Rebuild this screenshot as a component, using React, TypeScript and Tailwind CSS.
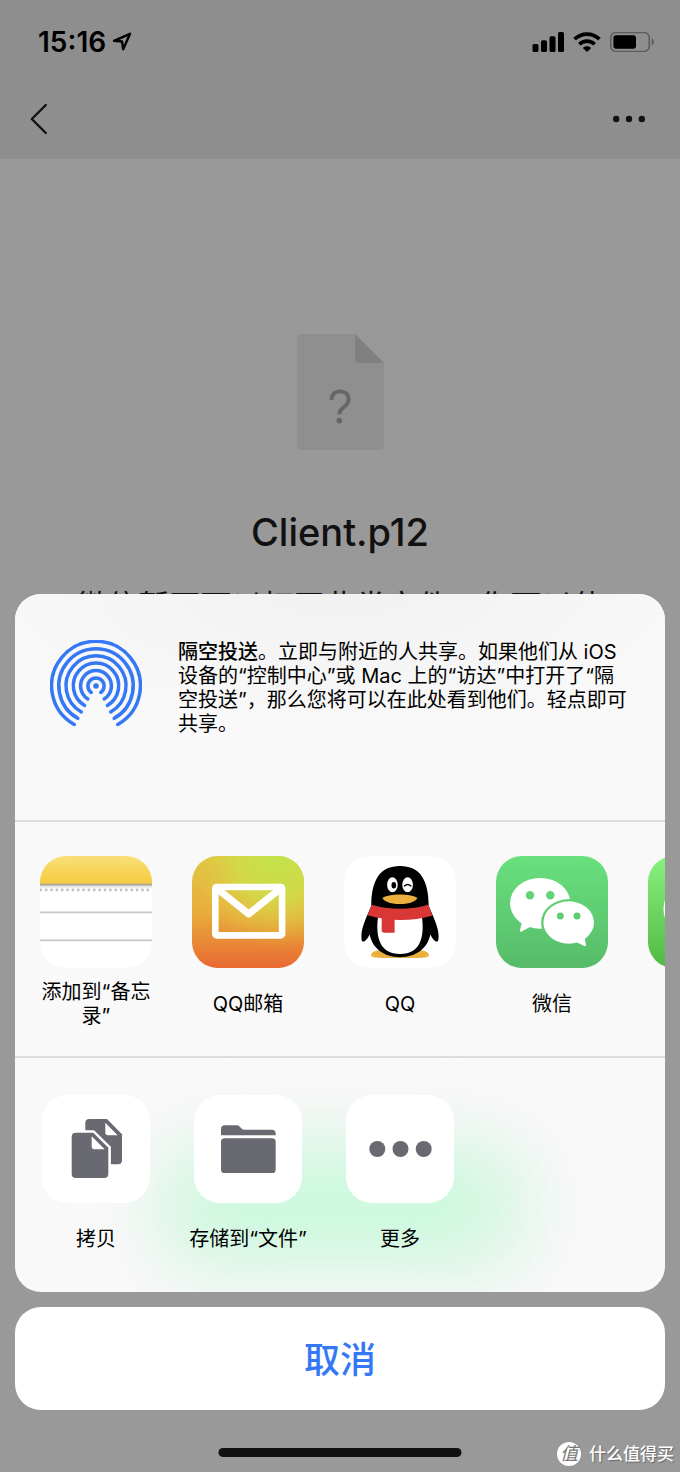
import React from "react";

const FONT = "font-['Inter','Noto_Sans_CJK_SC',sans-serif]";

function LocationArrow() {
  return (
    <svg className="h-5 w-5" viewBox="0 0 20 20" fill="none" aria-hidden="true">
      <path d="M2 8.8 18 1.8 11.2 17.2 10 9.5Z" stroke="#000" strokeWidth="2.4" strokeLinejoin="round" />
    </svg>
  );
}

function Signal() {
  return (
    <svg className="h-5 w-8" viewBox="0 0 32 20" aria-hidden="true">
      <rect x="0.5" y="12" width="6" height="8" rx="1.6" />
      <rect x="9" y="8.3" width="6" height="11.7" rx="1.6" />
      <rect x="17.5" y="4.2" width="6" height="15.8" rx="1.6" />
      <rect x="26" y="0" width="6" height="20" rx="1.6" />
    </svg>
  );
}

function Wifi() {
  return (
    <svg className="h-5 w-7" viewBox="0 0 28 20" fill="none" stroke="#000" aria-hidden="true">
      <path d="M1.6 7.2C8.6.4 19.4.4 26.4 7.2" strokeWidth="3.8" />
      <path d="M6.3 12.3C10.7 8.1 17.3 8.1 21.7 12.3" strokeWidth="3.6" />
      <path d="M9.8 15.9C12.2 13.7 15.8 13.7 18.2 15.9L14 20Z" fill="#000" stroke="none" />
    </svg>
  );
}

function Battery() {
  return (
    <svg className="h-5 w-11" viewBox="0 0 44 20" aria-hidden="true">
      <rect x="0.8" y="0.6" width="38.4" height="18.8" rx="5" fill="none" stroke="#5c5c5c" strokeWidth="1.5" />
      <rect x="3.4" y="3.3" width="22.6" height="13.4" rx="2.6" />
      <path d="M41.6 6.6C44.6 7.6 44.6 12.4 41.6 13.4Z" fill="#5c5c5c" />
    </svg>
  );
}

function UnknownFile() {
  return (
    <svg className="h-[116px] w-[87px]" viewBox="0 0 87 116" aria-hidden="true">
      <path d="M4 0H58L87 29V112Q87 116 83 116H4Q0 116 0 112V4Q0 0 4 0Z" fill="#8f8f8f" />
      <path d="M58 0 87 29H62Q58 29 58 25Z" fill="#808080" />
      <path d="M34.6 66C34.6 60.4 38 57.3 43.2 57.3S51.6 60.5 51.6 65.2C51.6 69 49.6 71 46.6 73.2 43.6 75.4 42.3 77 42.3 80.2" fill="none" stroke="#666" strokeWidth="3.8" />
      <circle cx="42.3" cy="86.6" r="2.8" fill="#666" />
    </svg>
  );
}

const RINGS: [number, number, number][] = [
  [44.4, 21.8, 38.4],
  [37.2, 18.2, 32.3],
  [30, 14.7, 26],
  [22.7, 11.4, 19.4],
  [15.4, 8.2, 12.9],
  [8.1, 4.8, 6.5],
];

function AirDrop() {
  return (
    <svg className="h-[92px] w-[92px] shrink-0" viewBox="-46 -46 92 92" fill="none" stroke="#3478f6" strokeWidth="3.5" strokeLinecap="round" aria-hidden="true">
      {RINGS.map(([r, x, y]) => (
        <path key={r} d={`M${-x} ${y}A${r} ${r} 0 1 1 ${x} ${y}`} />
      ))}
      <circle r="2.8" fill="#3478f6" stroke="none" />
    </svg>
  );
}

function NotesIcon() {
  return (
    <svg className="h-full w-full" viewBox="0 0 112 112" aria-hidden="true">
      <defs>
        <linearGradient id="notes" x2="0" y2="1">
          <stop stopColor="#f9df78" />
          <stop offset="1" stopColor="#f5cb3f" />
        </linearGradient>
        <linearGradient id="notesShade" x2="0" y2="1">
          <stop stopColor="#d8d8d8" />
          <stop offset="1" stopColor="#fff" />
        </linearGradient>
      </defs>
      <rect width="112" height="112" fill="#fff" />
      <rect width="112" height="28" fill="url(#notes)" />
      <rect y="29" width="112" height="4" fill="url(#notesShade)" />
      <rect y="27.6" width="112" height="2" fill="#b0ab98" />
      <path d="M.8 34H112" stroke="#c0c0c4" strokeWidth="2.8" strokeLinecap="round" strokeDasharray="0 5.35" />
      <path d="M0 56.4H112M0 84.4H112" stroke="#c8c7cc" strokeWidth="1.8" />
    </svg>
  );
}

function MailIcon() {
  return (
    <svg className="h-full w-full" viewBox="0 0 112 112" aria-hidden="true">
      <defs>
        <linearGradient id="mail" x2="0" y2="1">
          <stop stopColor="#e2c544" />
          <stop offset=".5" stopColor="#e9ad3c" />
          <stop offset="1" stopColor="#e86a32" />
        </linearGradient>
        <radialGradient id="mailGlow" gradientUnits="userSpaceOnUse" cx="86" cy="2" r="90">
          <stop stopColor="#c2e24a" />
          <stop offset=".45" stopColor="#d0dc48" stopOpacity=".9" />
          <stop offset="1" stopColor="#e4c542" stopOpacity="0" />
        </radialGradient>
      </defs>
      <rect width="112" height="112" fill="url(#mail)" />
      <rect width="112" height="112" fill="url(#mailGlow)" />
      <g fill="none" stroke="#fff" strokeWidth="6.6" strokeLinejoin="round">
        <rect x="23.3" y="31" width="66.8" height="48.4" rx="1.5" />
        <path d="M25.5 33 56.7 58 88 33" strokeWidth="7" />
      </g>
    </svg>
  );
}

function QQIcon() {
  return (
    <svg className="h-full w-full" viewBox="0 0 112 112" aria-hidden="true">
      <rect width="112" height="112" fill="#fff" />
      <path d="M27 99C27 95.5 35 93 43 94.5L56 99 69 94.5C77 93 85 95.5 85 99 85 101.5 80 101.9 72 101.9H40C32 101.9 27 101.5 27 99Z" fill="#ecb03e" />
      <path d="M27.3 50C27.3 24 36 10 56 10S84.7 24 84.7 50C89 60 94.6 71 94.6 80 94.6 83 94.5 85.6 93 85.6 90.5 85.6 88 82 86.3 78.5 84 92 72 101.2 56 101.2S28 92 25.7 78.5C24 82 21.5 85.6 19 85.6 17.5 85.6 17.4 83 17.4 80 17.4 71 23 60 27.3 50Z" />
      <path d="M34 61H78C80.5 81 76.5 98 56 98S31.5 81 34 61Z" fill="#fff" />
      <path d="M37.7 61H50.6V76.8H42Q37.7 76.8 37.7 75Z" fill="#d93735" />
      <path d="M27.6 48.7C44 54 68 54 84.4 48.7L88.3 59.8C68 65.6 44 65.6 23.5 59.3Z" fill="#d93735" />
      <ellipse cx="48.4" cy="28.7" rx="5.3" ry="7.5" fill="#fff" />
      <ellipse cx="63.6" cy="28.7" rx="5.3" ry="7.5" fill="#fff" />
      <ellipse cx="49.8" cy="29.2" rx="2.3" ry="3.2" />
      <path d="M60.5 30Q63.7 27 66.8 30" fill="none" stroke="#000" strokeWidth="1.5" strokeLinecap="round" />
      <path d="M38.3 42.2C44 37.4 68 37.4 73.4 42.2 69 50 43 50 38.3 42.2Z" fill="#ecb03e" />
    </svg>
  );
}

function WeChatIcon() {
  return (
    <svg className="h-full w-full" viewBox="0 0 112 112" aria-hidden="true">
      <defs>
        <linearGradient id="wechat" gradientUnits="userSpaceOnUse" x1="0" y1="0" x2="0" y2="112">
          <stop stopColor="#69e07d" />
          <stop offset="1" stopColor="#57bb69" />
        </linearGradient>
      </defs>
      <rect width="112" height="112" fill="url(#wechat)" />
      <g fill="#fff">
        <ellipse cx="44.2" cy="47.3" rx="30.2" ry="25.4" />
        <path d="M26 65 24 74.5Q23.9 76.2 25.5 75.5L35 70.5Z" />
      </g>
      <ellipse cx="72.7" cy="66.5" rx="27.6" ry="23.4" fill="url(#wechat)" />
      <g fill="#fff">
        <ellipse cx="72.7" cy="66.5" rx="25.3" ry="21.2" />
        <path d="M88.5 81 90 89Q89.8 90.8 88.3 90L79 85.5Z" />
      </g>
      <g fill="url(#wechat)">
        <circle cx="34" cy="39.3" r="4.2" />
        <circle cx="54.3" cy="39.3" r="4.2" />
        <circle cx="64.3" cy="60" r="3.5" />
        <circle cx="81" cy="60" r="3.5" />
      </g>
    </svg>
  );
}

function MessagesIcon() {
  return (
    <svg className="h-full w-full" viewBox="0 0 112 112" aria-hidden="true">
      <defs>
        <linearGradient id="messages" x2="0" y2="1">
          <stop stopColor="#88f280" />
          <stop offset="1" stopColor="#52b843" />
        </linearGradient>
      </defs>
      <rect width="112" height="112" fill="url(#messages)" />
      <ellipse cx="56" cy="53" rx="40.5" ry="34" fill="#fff" />
    </svg>
  );
}

function CopyIcon() {
  return (
    <svg className="h-full w-full" viewBox="0 0 108 108" aria-hidden="true">
      <path d="M47.3 24H65L80 39.3V65.3Q80 69.3 76 69.3H43.3V28Q43.3 24 47.3 24Z" fill="#696971" />
      <path d="M63.3 27.7V37.5Q63.3 40.2 66 40.2H75.6Z" fill="#fff" />
      <path d="M27.3 35.3H52L68.9 51.8V86H27.3Z" fill="#fff" />
      <path d="M33.7 37.7H51.3L66.3 52.7V79Q66.3 83 62.3 83H33.7Q29.7 83 29.7 79V41.7Q29.7 37.7 33.7 37.7Z" fill="#696971" />
      <path d="M49.7 41.3V51.6Q49.7 54.3 52.4 54.3H62.7Z" fill="#fff" />
    </svg>
  );
}

function FolderIcon() {
  return (
    <svg className="h-full w-full" viewBox="0 0 108 108" fill="#696971" aria-hidden="true">
      <path d="M31 30.3H42.5Q44.5 30.3 45.8 31.7L47.5 33.5Q48.6 34.7 50.4 34.7H77.7Q81.7 34.7 81.7 38.7V40.3H27V34.3Q27 30.3 31 30.3Z" />
      <rect x="27" y="43.3" width="54.7" height="34.7" rx="3.6" />
    </svg>
  );
}

function MoreIcon() {
  return (
    <svg className="h-full w-full" viewBox="0 0 108 108" fill="#696971" aria-hidden="true">
      <circle cx="31.3" cy="54" r="8" />
      <circle cx="54.5" cy="54" r="8" />
      <circle cx="77.7" cy="54" r="8" />
    </svg>
  );
}

const APPS = [
  { label: "添加到“备忘录”", icon: <NotesIcon /> },
  { label: "QQ邮箱", icon: <MailIcon /> },
  { label: "QQ", icon: <QQIcon /> },
  { label: "微信", icon: <WeChatIcon /> },
  { label: "", icon: <MessagesIcon /> },
];

const ACTIONS = [
  { label: "拷贝", icon: <CopyIcon /> },
  { label: "存储到“文件”", icon: <FolderIcon /> },
  { label: "更多", icon: <MoreIcon /> },
];

export default function App() {
  return (
    <div className={`relative flex min-h-screen flex-col overflow-hidden bg-[#999999] text-black ${FONT}`}>
      <header className="bg-[#8e8e8e] pb-[5px]">
        <div className="flex h-[84px] items-center justify-between pr-[26px] pl-[38px]">
          <div className="flex items-center gap-1.5">
            <span className="text-[28px] leading-8 font-semibold">15:16</span>
            <LocationArrow />
          </div>
          <div className="flex items-center gap-[9px]">
            <Signal />
            <Wifi />
            <Battery />
          </div>
        </div>
        <nav className="flex h-[70px] items-center justify-between pr-[35px] pl-[30px]">
          <button type="button" aria-label="返回">
            <svg className="h-8 w-[18px]" viewBox="0 0 18 32" fill="none" stroke="#111" strokeWidth="2.4" strokeLinecap="round" strokeLinejoin="round">
              <path d="M15.8 2 1.8 16 15.8 30" />
            </svg>
          </button>
          <button type="button" aria-label="菜单">
            <svg className="h-2 w-8" viewBox="0 0 32 8" fill="#111">
              <circle cx="3.2" cy="4" r="3.2" />
              <circle cx="16" cy="4" r="3.2" />
              <circle cx="28.8" cy="4" r="3.2" />
            </svg>
          </button>
        </nav>
      </header>

      <main className="flex flex-col items-center pt-[175px]">
        <UnknownFile />
        <h1 className="mt-[58px] text-[38px] leading-[48px] font-medium text-[#111]">Client.p12</h1>
        <p className="mt-7 text-[31px] leading-[44px] whitespace-nowrap text-[#111]">微信暂不可以打开此类文件，你可以使</p>
      </main>

      <div className="absolute inset-x-0 bottom-0 flex flex-col gap-[15px] px-[15px] pb-[62px]">
        <div className="overflow-hidden rounded-[26px] bg-[#f9f9f9]">
          <section className="flex items-start gap-9 border-b-2 border-[#dcdcdc] bg-radial-[ellipse_60%_60%_at_50%_0%] from-[#f1f1f1] to-[#f9f9f9] pt-[46px] pr-5 pb-[84px] pl-[35px]">
            <AirDrop />
            <p className="text-[20px] leading-6 whitespace-nowrap">
              <b className="font-medium">隔空投送</b>。立即与附近的人共享。如果他们从 iOS
              <br />
              设备的“控制中心”或 Mac 上的“访达”中打开了“隔
              <br />
              空投送”，那么您将可以在此处看到他们。轻点即可
              <br />
              共享。
            </p>
          </section>

          <section className="flex gap-10 overflow-hidden border-b-2 border-[#dcdcdc] pt-[34px] pb-[28px] pl-[25px]">
            {APPS.map((app, i) => (
              <button key={i} type="button" aria-label={app.label || "信息"} className="w-28 shrink-0">
                <span className="block h-28 w-28 overflow-hidden rounded-[26px]">{app.icon}</span>
                <span className="mt-3 flex h-12 items-center justify-center text-[20px] leading-6">{app.label}</span>
              </button>
            ))}
          </section>

          <section className="relative flex gap-6 overflow-hidden pt-[37px] pb-[41px] pl-[17px]">
            <div className="absolute top-[70px] left-[130px] h-[160px] w-[400px] rounded-full bg-[#e9f6ee] blur-[30px]" />
            <div className="absolute top-[105px] left-[160px] h-[84px] w-[330px] rounded-full bg-[#c8f9db] blur-[34px]" />
            {ACTIONS.map((action) => (
              <button key={action.label} type="button" className="relative flex w-32 shrink-0 flex-col items-center">
                <span className="block h-[108px] w-[108px] rounded-[26px] bg-white">{action.icon}</span>
                <span className="mt-6 text-[20px] leading-6 whitespace-nowrap">{action.label}</span>
              </button>
            ))}
          </section>
        </div>

        <button type="button" className="h-[103px] rounded-[26px] bg-white pt-0.5 text-[36px] font-medium text-[#3478f6]">
          取消
        </button>
      </div>

      <div className="absolute bottom-[15px] left-1/2 h-[9px] w-[243px] -translate-x-1/2 rounded-full bg-[#111]" />

      <div className="absolute right-[6px] bottom-[6px] flex items-center gap-2 text-white">
        <span className="flex h-6 w-6 items-center justify-center rounded-full bg-white text-[18px] leading-6 text-[#777] italic">值</span>
        <span className="text-[17px] leading-6 font-medium text-shadow-[1px_1px_1px_#666]">什么值得买</span>
      </div>
    </div>
  );
}
